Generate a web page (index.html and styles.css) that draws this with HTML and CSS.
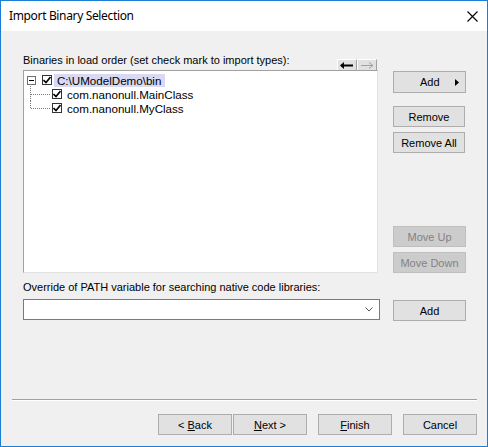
FILE: index.html
```html
<!DOCTYPE html>
<html>
<head>
<meta charset="utf-8">
<link rel="stylesheet" href="styles.css">
</head>
<body>
<div class="window">
  <div class="titlebar">
    <span class="title">Import Binary Selection</span>
    <svg class="close" width="11" height="11" viewBox="0 0 11 11"><path d="M0.5 0.5 L10.5 10.5 M10.5 0.5 L0.5 10.5" stroke="#000" stroke-width="1.1" fill="none"/></svg>
  </div>
  <div class="content">
    <div class="top">
      <div class="left">
        <div class="list-head">
          <span class="label">Binaries in load order (set check mark to import types):</span>
          <div class="arrows">
            <span class="arrow-btn"><svg width="14" height="7" viewBox="0 0 14 7"><path d="M1 3.5 H13" stroke="#000" stroke-width="2"/><path d="M0 3.5 L4 0 V7 Z" fill="#000"/></svg></span>
            <span class="arrow-btn"><svg width="14" height="7" viewBox="0 0 14 7"><path d="M1 3.5 H12" stroke="#a0a0a0" stroke-width="1"/><path d="M9 0.5 L13 3.5 L9 6.5" stroke="#a0a0a0" stroke-width="1" fill="none"/></svg></span>
          </div>
        </div>
        <div class="list">
          <div class="row root">
            <span class="expander"><span class="minus"></span></span>
            <span class="check"><svg width="8" height="8" viewBox="0 0 8 8"><path d="M0.5 4 L3 6.5 L7.5 1" stroke="#000" stroke-width="1.6" fill="none"/></svg></span>
            <span class="text sel">C:\UModelDemo\bin</span>
          </div>
          <div class="children">
            <div class="row child">
              <span class="conn"></span>
              <span class="check"><svg width="8" height="8" viewBox="0 0 8 8"><path d="M0.5 4 L3 6.5 L7.5 1" stroke="#000" stroke-width="1.6" fill="none"/></svg></span>
              <span class="text">com.nanonull.MainClass</span>
            </div>
            <div class="row child">
              <span class="conn"></span>
              <span class="check"><svg width="8" height="8" viewBox="0 0 8 8"><path d="M0.5 4 L3 6.5 L7.5 1" stroke="#000" stroke-width="1.6" fill="none"/></svg></span>
              <span class="text">com.nanonull.MyClass</span>
            </div>
          </div>
        </div>
      </div>
      <div class="right">
        <button class="btn btn-add"><span>Add</span><svg class="tri" width="4" height="7" viewBox="0 0 4 7"><path d="M0 0 L4 3.5 L0 7 Z" fill="#000"/></svg></button>
        <button class="btn narrow gap-remove"><span>Remove</span></button>
        <button class="btn narrow gap-small"><span>Remove All</span></button>
        <button class="btn disabled gap-auto"><span>Move Up</span></button>
        <button class="btn disabled gap-small"><span>Move Down</span></button>
      </div>
    </div>
    <div class="path-label">Override of PATH variable for searching native code libraries:</div>
    <div class="path-row">
      <div class="combo">
        <svg width="8" height="5" viewBox="0 0 8 5"><path d="M0.5 0.5 L4 4 L7.5 0.5" stroke="#555" stroke-width="1" fill="none"/></svg>
      </div>
      <button class="btn"><span>Add</span></button>
    </div>
    <div class="footer">
      <div class="separator"></div>
      <div class="footer-buttons">
        <button class="btn fbtn"><span>&lt; <u>B</u>ack</span></button>
        <button class="btn fbtn next"><span><u>N</u>ext &gt;</span></button>
        <button class="btn fbtn wide-gap"><span><u>F</u>inish</span></button>
        <button class="btn fbtn wide-gap"><span>Cancel</span></button>
      </div>
    </div>
  </div>
</div>
</body>
</html>
```
FILE: styles.css
```css
* { box-sizing: border-box; }
html, body { margin: 0; padding: 0; background: #ffffff; }
body { font-family: "Liberation Sans", Arial, sans-serif; font-size: 11px; color: #000; }

.window {
  width: 488px;
  height: 447px;
  border: 1px solid #1a7fd4;
  display: flex;
  flex-direction: column;
  background: #f0f0f0;
}

.titlebar {
  height: 30px;
  flex: none;
  background: #ffffff;
  display: flex;
  align-items: center;
  padding-left: 8px;
  padding-right: 9px;
}
.title {
  font-family: "Noto Sans", "Open Sans", sans-serif;
  font-size: 12px;
  letter-spacing: -0.35px;
  color: #000;
  flex: 1;
  margin-top: -1px;
}
.close { display: block; margin-top: 1px; }

.content {
  flex: 1;
  display: flex;
  flex-direction: column;
  padding: 0 10px 11px 11px;
}

.top {
  display: grid;
  grid-template-columns: 355px 73px;
  column-gap: 15px;
  padding: 23px 0 0 11px;
}

.left { display: flex; flex-direction: column; }
.list-head {
  height: 16px;
  display: flex;
  justify-content: space-between;
  align-items: flex-end;
}
.label { line-height: 13px; align-self: flex-start; }
.arrows { display: flex; margin-right: 1px; }
.arrow-btn {
  width: 20px;
  height: 11px;
  background: #e1e1e1;
  border: 1px solid #fff;
  border-right-color: #a0a0a0;
  border-bottom: none;
  display: flex;
  align-items: center;
  justify-content: center;
}
.list {
  height: 203px;
  background: #fff;
  border: 1px solid #a0a0a0;
  border-right-color: #e3e3e3;
  border-bottom-color: #e3e3e3;
  padding: 2px 0 0 2px;
}

.row {
  height: 14px;
  display: flex;
  align-items: center;
  font-size: 11.6px;
}
.expander {
  width: 9px;
  height: 9px;
  border: 1px solid #6d6d6d;
  margin-left: 1px;
  display: flex;
  align-items: center;
  justify-content: center;
  background: #fff;
}
.minus { width: 5px; height: 1px; background: #000; }
.check {
  width: 10px;
  height: 10px;
  border: 1px solid #333;
  display: flex;
  align-items: center;
  justify-content: center;
  background: #fff;
  margin-left: 6px;
}
.text { padding: 0 3px; line-height: 13px; margin-left: 2px; }
.sel { background: #d9d9f4; padding-right: 4px; }

.child .check { margin-left: 0; }
.children { padding-left: 4px; }
.conn {
  width: 22px;
  align-self: stretch;
  position: relative;
}
.conn::before {
  content: "";
  position: absolute;
  left: 0;
  top: -3px;
  bottom: 0;
  border-left: 1px dotted #7a7a7a;
}
.child:last-child .conn::before { bottom: 50%; top: 0; }
.conn::after {
  content: "";
  position: absolute;
  left: 1px;
  right: 2px;
  top: 50%;
  border-top: 1px dotted #7a7a7a;
}

.right {
  display: flex;
  flex-direction: column;
  align-items: flex-start;
  padding-top: 17px;
}

.btn {
  font-family: "Liberation Sans", Arial, sans-serif;
  font-size: 11px;
  color: #000;
  background: #e1e1e1;
  border: 1px solid #adadad;
  height: 21px;
  width: 73px;
  padding: 0;
  margin: 0;
  display: flex;
  align-items: center;
  justify-content: center;
}
.btn-add { justify-content: flex-start; padding-left: 26px; height: 22px; }
.btn-add .tri { margin-left: 15px; }
.narrow { width: 72px; }
.gap-remove { margin-top: 13px; }
.gap-small { margin-top: 5px; }
.gap-auto { margin-top: auto; }
.disabled { background: #cccccc; border-color: #bfbfbf; color: #838383; }

.path-label {
  padding-left: 11px;
  margin-top: 8px;
  line-height: 13px;
}
.path-row {
  display: flex;
  padding-left: 11px;
  margin-top: 5px;
  align-items: flex-start;
  gap: 13px;
}
.combo {
  width: 357px;
  height: 21px;
  background: #fff;
  border: 1px solid #7a7a7a;
  display: flex;
  align-items: center;
  justify-content: flex-end;
  padding-right: 6px;
}
.path-row .btn { margin-top: 1px; }

.footer { margin-top: auto; }
.separator {
  border-top: 1px solid #a0a0a0;
  border-bottom: 1px solid #ffffff;
}
.footer-buttons {
  display: flex;
  justify-content: flex-end;
  margin-top: 13px;
}
.fbtn { width: 74px; }
.next { margin-left: 1px; }
.wide-gap { margin-left: 11px; }
```
